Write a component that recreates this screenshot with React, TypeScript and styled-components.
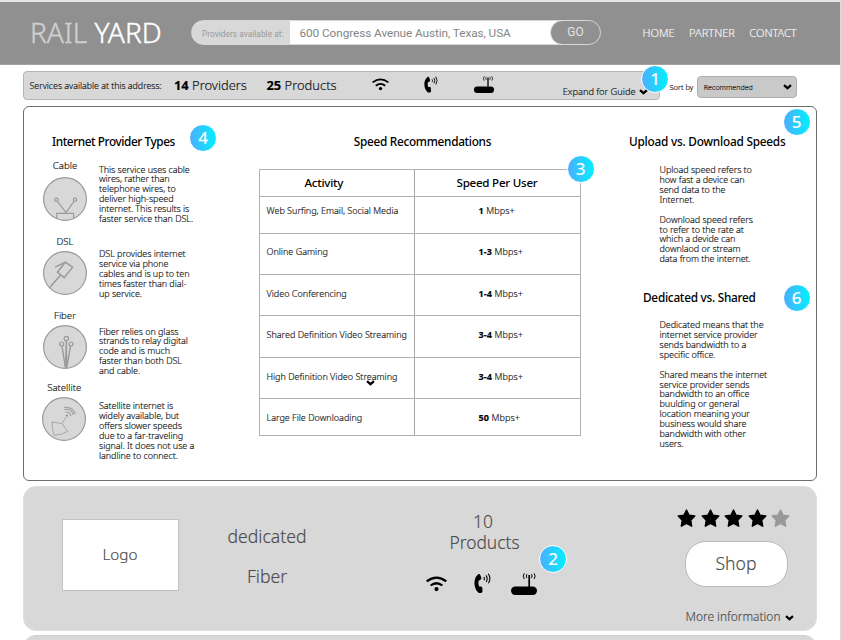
import React from "react";
import styled, { createGlobalStyle } from "styled-components";

const GlobalStyle = createGlobalStyle`
  * { box-sizing: border-box; }
  html, body { margin: 0; padding: 0; background: #fff; }
  body {
    font-family: "Noto Sans", sans-serif;
    font-weight: 300;
    color: #111;
    -webkit-text-stroke: 0.15px currentColor;
    overflow: hidden;
  }
`;

const Page = styled.div`
  width: 841px;
  height: 640px;
  overflow: hidden;
  display: flex;
  flex-direction: column;
  border-top: 2px solid #e4e6e6;
  border-right: 1px solid #dcdcdc;
`;

/* Header */
const Header = styled.header`
  flex: none;
  height: 63px;
  background: #909090;
  border-bottom: 1px solid #a2a2a2;
  display: flex;
  align-items: center;
  padding-left: 30px;
`;
const Brand = styled.div`
  width: 161px;
  margin-top: -3px;
  font-size: 28px;
  line-height: 40px;
  letter-spacing: 0.05px;
  white-space: nowrap;
  color: #fff;
  -webkit-text-stroke: 0.4px currentColor;
`;
const BrandMuted = styled.span`
  color: #cfcfcf;
`;
const Search = styled.div`
  width: 410px;
  height: 25px;
  margin-top: -1px;
  display: flex;
  border-radius: 13px;
  border: 1px solid #d8d8d8;
  background: linear-gradient(90deg, #d8d8d8 98px, #fff 98px, #fff 375px, #909090 375px);
  overflow: hidden;
  font-family: Roboto, sans-serif;
  font-weight: 400;
  color: #858585;
  -webkit-text-stroke: 0;
`;
const SearchLabel = styled.div`
  width: 98px;
  padding-left: 10px;
  font-size: 8.2px;
  line-height: 26px;
  letter-spacing: 0.08px;
  color: #999;
  white-space: nowrap;
`;
const SearchValue = styled.div`
  flex: 1;
  padding-left: 9.5px;
  font-size: 11.8px;
  line-height: 24px;
  letter-spacing: -0.08px;
  white-space: nowrap;
`;
const GoButton = styled.button`
  width: 51px;
  height: 25px;
  margin: -1px;
  border: 1px solid #d8d8d8;
  border-radius: 13px;
  background: #909090;
  color: #e4e4e4;
  font: 400 12px/23px Roboto, sans-serif;
  padding: 0;
`;
const Nav = styled.nav`
  display: flex;
  gap: 14.5px;
  margin-left: 41.5px;
  font-size: 11px;
  line-height: 16px;
  color: #f6f6f6;
`;

/* Filter strip */
const FilterRow = styled.div`
  flex: none;
  height: 41px;
  padding: 5.5px 0 0 23px;
  display: flex;
`;
const Summary = styled.section`
  position: relative;
  width: 637px;
  height: 29.5px;
  border: 1px solid #b4b4b4;
  border-radius: 4px;
  background: #d8d8d8;
  display: flex;
  align-items: center;
  padding-left: 5.5px;
`;
const SummaryLabel = styled.span`
  width: 144.5px;
  font-size: 8.9px;
  letter-spacing: -0.03px;
  white-space: nowrap;
`;
const Count = styled.span<{ $width: number }>`
  width: ${(p) => p.$width}px;
  margin-top: -1px;
  font-size: 12.9px;
  white-space: nowrap;
  b { font-weight: 700; color: #000; }
`;
const IconGroup = styled.div<{ $gap: number; $last: number; $top: number }>`
  display: flex;
  align-items: center;
  margin-top: ${(p) => p.$top}px;
  svg { display: block; flex: none; }
  svg + svg { margin-left: ${(p) => p.$gap}px; }
  svg:nth-child(3) { margin-left: ${(p) => p.$last}px; }
`;
const Expand = styled.div`
  display: flex;
  align-items: center;
  gap: 3px;
  margin: 13px 0 0 auto;
  padding-right: 11.5px;
  font-size: 9.3px;
  line-height: 14px;
  letter-spacing: -0.04px;
  svg { margin-top: 1px; }
`;
const Sort = styled.div`
  display: flex;
  align-items: center;
  height: 33px;
  margin-left: 9.5px;
  font-size: 7.5px;
  white-space: nowrap;
`;
const SortSelect = styled.div`
  width: 100px;
  height: 22px;
  margin-left: 4px;
  padding: 0 4.5px 0 5.5px;
  display: flex;
  align-items: center;
  justify-content: space-between;
  border: 1px solid #aeaeae;
  border-radius: 4px;
  background: #c9c9c9;
  font-size: 7.1px;
`;

/* Numbered callouts sit over the content they annotate */
const Badge = styled.div<{ $x: number; $y: number }>`
  position: absolute;
  left: ${(p) => p.$x}px;
  top: ${(p) => p.$y}px;
  z-index: 2;
  width: 28px;
  height: 28px;
  border-radius: 50%;
  border: 1px solid #fff;
  background: linear-gradient(90deg, #4facfe, #00f2fe);
  background-origin: border-box;
  color: #fff;
  font: 500 17px/26px "Noto Sans", sans-serif;
  -webkit-text-stroke: 0;
  text-align: center;
`;

/* Guide */
const Guide = styled.section`
  position: relative;
  flex: none;
  width: 794px;
  height: 374.5px;
  margin-left: 23px;
  border: 1px solid #6e6e6e;
  border-radius: 6px;
  display: grid;
  grid-template-columns: 235px 322px 1fr;
`;
const Heading = styled.h2<{ $spacing: number }>`
  margin: 0;
  font-size: 11.8px;
  line-height: 16px;
  font-weight: 500;
  letter-spacing: ${(p) => p.$spacing}px;
  color: #000;
  white-space: nowrap;
  -webkit-text-stroke: 0;
`;
const Types = styled.div`
  padding: 26px 0 0 17.5px;
  ${Heading} { padding-left: 10.5px; }
`;
const TypeList = styled.div`
  display: grid;
  grid-template-rows: 76px 73.5px 72px 90px;
  margin-top: 9px;
`;
const TypeRow = styled.div`
  display: grid;
  grid-template-columns: 47px 1fr;
  column-gap: 10.5px;
`;
const TypeMark = styled.div<{ $gap: number; $shift: number }>`
  display: flex;
  flex-direction: column;
  align-items: center;
  gap: ${(p) => p.$gap}px;
  font-size: 9.6px;
  line-height: 16px;
  padding-right: ${(p) => p.$shift}px;
  svg { display: block; }
`;
const Copy = styled.p<{ $top?: number }>`
  margin: 0;
  padding-top: ${(p) => p.$top ?? 0}px;
  font-size: 9px;
  line-height: 9.92px;
  letter-spacing: -0.06px;
  white-space: pre;
`;
const Speeds = styled.div`
  padding-top: 26px;
  display: flex;
  flex-direction: column;
  align-items: center;
  ${Heading} { padding-left: 5px; }
`;
const Table = styled.div`
  position: relative;
  width: 322px;
  margin-top: 19.5px;
  border: 1px solid #b2b2b2;
`;
const TableRow = styled.div<{ $height: number; $offset: number }>`
  display: grid;
  grid-template-columns: 154.5px 1fr;
  height: ${(p) => p.$height}px;
  font-size: 9px;
  line-height: 14px;
  white-space: nowrap;
  & + & { border-top: 1px solid #b2b2b2; }
  & > div { padding-top: ${(p) => p.$offset - 7.5}px; }
`;
const Activity = styled.div`
  padding-left: 6.5px;
  border-right: 1px solid #a6a6a6;
`;
const Speed = styled.div`
  padding-left: 64px;
  letter-spacing: 0.12px;
  b { font-weight: 700; color: #000; }
`;
const HeadCell = styled.div<{ $indent: number; $divider?: boolean }>`
  padding-left: ${(p) => p.$indent}px;
  font-size: 11.6px;
  font-weight: 500;
  letter-spacing: -0.25px;
  color: #000;
  -webkit-text-stroke: 0;
  border-right: ${(p) => (p.$divider ? "1px solid #a6a6a6" : "0")};
`;
const StrayChevron = styled.div`
  position: absolute;
  left: 105.5px;
  top: 199.5px;
`;
const Notes = styled.div`
  padding: 26px 0 0 48px;
`;
const Note = styled.article<{ $indent: number; $height: number }>`
  height: ${(p) => p.$height}px;
  ${Heading} { padding-left: ${(p) => p.$indent}px; }
  ${Copy} { padding-left: 30.5px; }
`;

/* Provider card */
const Card = styled.section`
  position: relative;
  flex: none;
  width: 794px;
  height: 144.5px;
  margin: 5.5px 0 0 23px;
  border: 1px solid #dedede;
  border-radius: 13px;
  background: #d8d8d8;
  display: grid;
  grid-template-columns: 154.5px 177px 257px 1fr;
  color: #4c4c4c;
`;
const Logo = styled.div`
  width: 117px;
  height: 72px;
  margin: 32px 0 0 38px;
  border: 1px solid #c2c2c2;
  background: #fff;
  font-size: 15.3px;
  line-height: 68px;
  text-align: center;
  padding-right: 1px;
`;
const Connection = styled.div`
  padding-top: 36.5px;
  display: flex;
  flex-direction: column;
  align-items: center;
  gap: 16px;
  font-size: 17.6px;
  line-height: 24px;
`;
const Offer = styled.div`
  padding: 22px 0 0 70px;
`;
const OfferText = styled.div`
  width: 118px;
  display: flex;
  flex-direction: column;
  align-items: center;
  font-size: 17.4px;
  line-height: 24px;
  span + span { margin-top: -3.5px; }
  span:first-child { margin-right: 3px; }
`;
const Actions = styled.div`
  padding: 22px 0 0 64.5px;
`;
const Stars = styled.div`
  display: flex;
  gap: 4.5px;
  svg { display: block; }
`;
const Shop = styled.button`
  display: block;
  width: 103px;
  height: 46px;
  margin: 13px 0 0 7.5px;
  padding: 0 0 3px;
  border: 1px solid #bababa;
  border-radius: 21px;
  background: #fff;
  color: #4c4c4c;
  font: 300 17.6px/24px "Noto Sans", sans-serif;
`;
const More = styled.div`
  display: flex;
  align-items: center;
  gap: 4px;
  margin: 21px 0 0 8.5px;
  font-size: 11.95px;
  line-height: 18px;
  white-space: nowrap;
  svg { margin-top: 2px; }
`;
const NextCard = styled.div`
  flex: none;
  width: 794px;
  height: 40px;
  margin: 4.5px 0 0 23px;
  border-radius: 13px;
  border: 1px solid #cfcfcf;
  background: #d8d8d8;
`;

/* Icons */
const Chevron = () => (
  <svg width="9" height="6" viewBox="0 0 9 6" fill="none" stroke="#000" strokeWidth="2.2">
    <path d="M1 1.2 4.5 4.2 8 1.2" />
  </svg>
);
const Wifi = ({ w }: { w: number }) => (
  <svg width={w} height={(w * 16) / 21} viewBox="0 0 21 16" fill="none" stroke="#000" strokeWidth="2.2">
    <path d="M.7 5.4Q10.5-2.2 20.3 5.4" />
    <path d="M4.6 9.5Q10.5 5 16.4 9.5" />
    <circle cx="10.5" cy="13.1" r="2.1" fill="#000" stroke="none" />
  </svg>
);
const Phone = ({ w }: { w: number }) => (
  <svg width={w} height={(w * 21) / 17} viewBox="0 0 17 21" fill="none" stroke="#000">
    <path d="M4.2 1.2C5.1.8 5.9 1 6.3 1.9L7.3 4.8C7.6 5.7 7.2 6.3 6.4 6.8L4.7 7.8C4.2 9.8 4.4 11.6 5.2 13.4L6.9 13.5C7.8 13.6 8.2 14 8.3 15L8.5 18.1C8.5 19.1 8.1 19.6 7.2 19.9 6 20.3 4.8 20.2 4 19.3-.7 14.6-.9 5.1 4.2 1.2Z" fill="#000" stroke="none" />
    <path d="M9.8 4.1Q10.9 5.6 9.9 7.3M12 2.4Q14.2 5.4 12.2 8.9M14.3.8Q17.4 5.2 14.4 10.3" strokeWidth="1.1" />
  </svg>
);
const Router = ({ w }: { w: number }) => (
  <svg width={w} height={(w * 22) / 26} viewBox="0 0 26 22" fill="none" stroke="#000">
    <rect x="0" y="13.5" width="26" height="8.5" rx="4.2" fill="#000" stroke="none" />
    <path d="M18.2 2V14" strokeWidth="1.7" />
    <path d="M15.9 1.2Q14.7 3 15.9 5M20.5 1.2Q21.7 3 20.5 5M13.3.4Q11.2 3 13.3 6M23.1.4Q25.2 3 23.1 6" strokeWidth="1" />
  </svg>
);
const Star = ({ color }: { color: string }) => (
  <svg width="19" height="19" viewBox="0 0 19 19" fill={color} stroke={color} strokeWidth="1.4" strokeLinejoin="round">
    <path d="M9.5 1.1 12.1 6.2 17.8 7 13.7 11.2 14.7 17.2 9.5 14.5 4.3 17.2 5.3 11.2 1.2 7 6.9 6.2Z" />
  </svg>
);

const Disc = ({ children }: { children: React.ReactNode }) => (
  <svg width="44" height="44" viewBox="0 0 44 44" fill="none" stroke="#9a9a9a" strokeWidth="1.2">
    <circle cx="22" cy="22" r="21.4" fill="#d8d8d8" />
    {children}
  </svg>
);
const CableArt = () => (
  <Disc>
    <path d="M14.5 24.3 23 35.5 31 24.3M13.7 42V36.3H30.6V42" />
    <circle cx="13.4" cy="22.8" r="1.7" />
    <circle cx="32" cy="22.8" r="1.7" />
  </Disc>
);
const DslArt = () => (
  <Disc>
    <path d="M22.3 11.2 29.6 16.2 21.2 26.6 14.4 21.2ZM12.2 16.2 22.3 11.2M17.8 23.8 6.5 36.8" strokeWidth="1.5" />
  </Disc>
);
const FiberArt = () => (
  <Disc>
    <path d="M19 21.2 22.5 43 23.3 16M27.5 21.2 23.7 43 23.3 16" strokeWidth="1.4" />
    <circle cx="18.7" cy="19" r="2" />
    <circle cx="23.3" cy="13.6" r="2.2" />
    <circle cx="28" cy="19" r="2" />
  </Disc>
);
const SatelliteArt = () => (
  <Disc>
    <path d="M10 25 20 26.5 25.7 34.4Q20 37.8 12.2 38.3Q9.8 31 10 25ZM20 26.5 24.2 20" strokeWidth=".8" />
    <circle cx="25" cy="18.6" r="1.2" fill="#9a9a9a" stroke="none" />
    <path d="M23.6 15.2Q27.2 14.2 29 19M22.4 12.6Q29.4 11 31.2 17.8M22 10.4Q30.6 9.2 33.2 17" strokeWidth="1.1" />
  </Disc>
);

const types = [
  { name: "Cable", gap: 3, top: 6.5, shift: 0, art: <CableArt />, copy: "This service uses cable\nwires, rather than\ntelephone wires, to\ndeliver high-speed\ninternet. This results is\nfaster service than DSL." },
  { name: "DSL", gap: 1, top: 15, shift: 0, art: <DslArt />, copy: "DSL provides internet\nservice via phone\ncables and is up to ten\ntimes faster than dial-\nup service." },
  { name: "Fiber", gap: 1.5, top: 19, shift: 0, art: <FiberArt />, copy: "Fiber relies on glass\nstrands to relay digital\ncode and is much\nfaster than both DSL\nand cable." },
  { name: "Satellite", gap: 1.5, top: 21.5, shift: 1.5, art: <SatelliteArt />, copy: "Satellite internet is\nwidely available, but\noffers slower speeds\ndue to a far-traveling\nsignal. It does not use a\nlandline to connect." },
];

const speeds = [
  { activity: "Web Surfing, Email, Social Media", rate: "1", height: 36.5, offset: 14.5 },
  { activity: "Online Gaming", rate: "1-3", height: 41.5, offset: 19 },
  { activity: "Video Conferencing", rate: "1-4", height: 41, offset: 19.5 },
  { activity: "Shared Definition Video Streaming", rate: "3-4", height: 42, offset: 19.5 },
  { activity: "High Definition Video Streaming", rate: "3-4", height: 41, offset: 19 },
  { activity: "Large File Downloading", rate: "50", height: 37, offset: 19 },
];

export default function App() {
  return (
    <>
      <GlobalStyle />
      <Page>
        <Header>
          <Brand><BrandMuted>RAIL</BrandMuted> YARD</Brand>
          <Search>
            <SearchLabel>Providers available at:</SearchLabel>
            <SearchValue>600 Congress Avenue Austin, Texas, USA</SearchValue>
            <GoButton>GO</GoButton>
          </Search>
          <Nav><span>HOME</span><span>PARTNER</span><span>CONTACT</span></Nav>
        </Header>

        <FilterRow>
          <Summary>
            <SummaryLabel>Services available at this address:</SummaryLabel>
            <Count $width={92.5}><b>14</b> Providers</Count>
            <Count $width={105}><b>25</b> Products</Count>
            <IconGroup $gap={35} $last={36} $top={-1}>
              <Wifi w={17} />
              <Phone w={14} />
              <Router w={20} />
            </IconGroup>
            <Expand>Expand for Guide <Chevron /></Expand>
            <Badge $x={617} $y={-7}>1</Badge>
          </Summary>
          <Sort>
            Sort by
            <SortSelect>Recommended <Chevron /></SortSelect>
          </Sort>
        </FilterRow>

        <Guide>
          <Types>
            <Heading $spacing={-0.42}>Internet Provider Types</Heading>
            <TypeList>
              {types.map((t) => (
                <TypeRow key={t.name}>
                  <TypeMark $gap={t.gap} $shift={t.shift}>{t.name}{t.art}</TypeMark>
                  <Copy $top={t.top}>{t.copy}</Copy>
                </TypeRow>
              ))}
            </TypeList>
          </Types>
          <Speeds>
            <Heading $spacing={-0.3}>Speed Recommendations</Heading>
            <Table>
              <TableRow $height={26.5} $offset={14}>
                <HeadCell $indent={44.5} $divider>Activity</HeadCell>
                <HeadCell $indent={42}>Speed Per User</HeadCell>
              </TableRow>
              {speeds.map((s) => (
                <TableRow key={s.activity} $height={s.height} $offset={s.offset}>
                  <Activity>{s.activity}</Activity>
                  <Speed><b>{s.rate}</b> Mbps+</Speed>
                </TableRow>
              ))}
              <StrayChevron><Chevron /></StrayChevron>
              <Badge $x={306.5} $y={-15}>3</Badge>
            </Table>
          </Speeds>
          <Notes>
            <Note $indent={0} $height={155.5}>
              <Heading $spacing={-0.22}>Upload vs. Download Speeds</Heading>
              <Copy $top={16}>{"Upload speed refers to\nhow fast a device can\nsend data to the\nInternet.\n\nDownload speed refers\nto refer to the rate at\nwhich a devide can\ndownlaod or stream\ndata from the internet."}</Copy>
            </Note>
            <Note $indent={14} $height={180}>
              <Heading $spacing={-0.26}>Dedicated vs. Shared</Heading>
              <Copy $top={15.5}>{"Dedicated means that the\ninternet service provider\nsends bandwidth to a\nspecific office.\n\nShared means the internet\nservice provider sends\nbandwidth to an office\nbuulding or general\nlocation meaning your\nbusiness would share\nbandwidth with other\nusers."}</Copy>
            </Note>
          </Notes>
          <Badge $x={165} $y={17}>4</Badge>
          <Badge $x={758.5} $y={1}>5</Badge>
          <Badge $x={758.5} $y={176.5}>6</Badge>
        </Guide>

        <Card>
          <Logo>Logo</Logo>
          <Connection><span>dedicated</span><span>Fiber</span></Connection>
          <Offer>
            <OfferText><span>10</span><span>Products</span></OfferText>
            <IconGroup $gap={27.5} $last={19.5} $top={19}>
              <Wifi w={21} />
              <Phone w={17} />
              <Router w={26} />
            </IconGroup>
          </Offer>
          <Actions>
            <Stars>
              {[0, 1, 2, 3].map((i) => <Star key={i} color="#000" />)}
              <Star color="#989898" />
            </Stars>
            <Shop>Shop</Shop>
            <More>More information <Chevron /></More>
          </Actions>
          <Badge $x={515} $y={58}>2</Badge>
        </Card>
        <NextCard />
      </Page>
    </>
  );
}
